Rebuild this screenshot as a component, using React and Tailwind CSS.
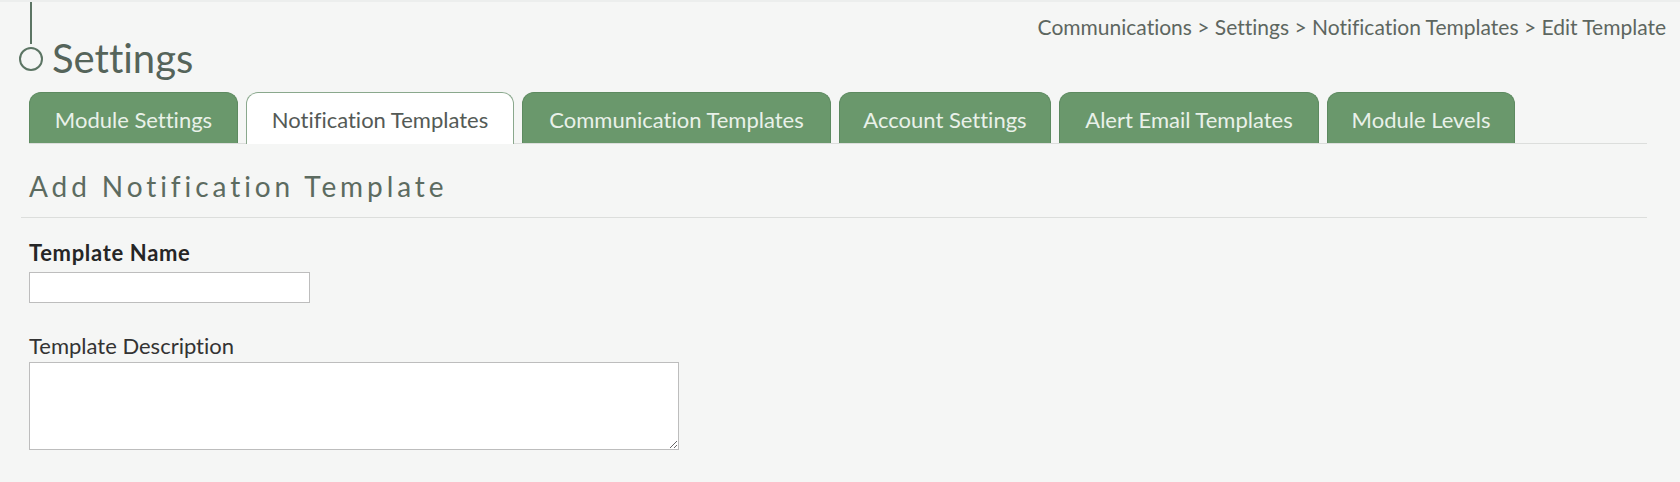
import React from 'react';

const tabs = [
  { label: 'Module Settings', w: 'w-[209px]' },
  { label: 'Notification Templates', w: 'w-[268px]', active: true },
  { label: 'Communication Templates', w: 'w-[309px]' },
  { label: 'Account Settings', w: 'w-[212px]' },
  { label: 'Alert Email Templates', w: 'w-[260px]' },
  { label: 'Module Levels', w: 'w-[188px]' },
];

export default function App() {
  return (
    <div className="min-h-screen bg-[#f5f6f5] font-['Lato',sans-serif] [font-variant-ligatures:none] border-t-2 border-[#eceeed]">
      <div className="pl-[29px] pr-[33px]">
        {/* Header */}
        <div className="flex justify-between h-[90px]">
          <div className="flex flex-col -ml-[10px]">
            <div className="w-[2px] h-[42px] bg-[#5c7564] ml-[11px]" />
            <div className="flex items-center gap-[9px] mt-[1px]">
              <div className="w-[24px] h-[24px] rounded-full border-2 border-[#5c7564]" />
              <h1 className="text-[40px] leading-[28px] text-[#55645a] -mt-[1px]">Settings</h1>
            </div>
          </div>
          <div className="pt-[13px] -mr-[19px] text-[21px] text-[#5d6660] leading-[24px]">
            Communications &gt; Settings &gt; Notification Templates &gt; Edit Template
          </div>
        </div>

        {/* Tabs */}
        <div className="flex gap-[8px] h-[52px] border-b border-[#dcdedc] items-end">
          {tabs.map((t) => (
            <div
              key={t.label}
              className={`${t.w} h-[51px] rounded-t-[12px] flex items-center justify-center text-[22px] pt-[2px] ${
                t.active
                  ? 'bg-white border border-b-0 border-[#8aa88d] text-[#545a56] h-[52px] -mb-px'
                  : 'bg-[#6a986c] border border-b-0 border-[#5d8a60] text-[#e9f1e9]'
              }`}
            >
              {t.label}
            </div>
          ))}
        </div>

        {/* Section heading */}
        <div className="pt-[25px] pb-[14px] border-b border-[#dcdedc] -ml-[8px] pl-[8px]">
          <h2 className="text-[28px] leading-[34px] tracking-[0.14em] text-[#5c6b60]">
            Add Notification Template
          </h2>
        </div>

        {/* Form */}
        <div className="pt-[23px]">
          <label className="block text-[22px] font-bold tracking-[0.03em] text-[#262626] leading-[24px]">Template Name</label>
          <input
            type="text"
            className="mt-[7px] block w-[281px] h-[31px] bg-white border border-[#bdbdbd] outline-none"
          />
          <label className="block mt-[31px] text-[22px] text-[#333] leading-[24px]">Template Description</label>
          <textarea className="mt-[4px] block w-[650px] h-[88px] bg-white border border-[#bdbdbd] outline-none" />
        </div>
      </div>
    </div>
  );
}
